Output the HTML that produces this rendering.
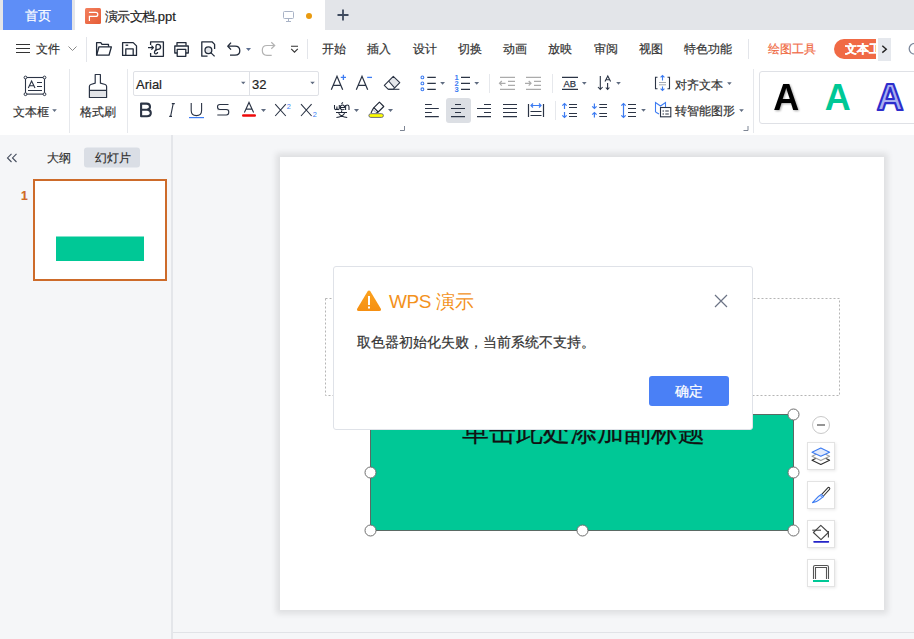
<!DOCTYPE html>
<html><head><meta charset="utf-8">
<style>
*{box-sizing:border-box;margin:0;padding:0}
html,body{width:914px;height:639px;overflow:hidden;background:#f5f6f8;font-family:"Liberation Sans",sans-serif;color:#333}
.a{position:absolute}
svg{position:absolute;overflow:visible}
.t{position:absolute;white-space:nowrap;line-height:1;-webkit-text-stroke:0.2px currentColor}
</style></head><body>
<!-- tab bar -->
<div class="a" style="left:0;top:0;width:914px;height:30px;background:#e3e5e9"></div>
<div class="a" style="left:3px;top:0;width:69px;height:30px;background:#5e8ef7"></div>
<div class="t" style="left:25px;top:10px;font-size:12.5px;color:#fff">首页</div>
<div class="a" style="left:75px;top:0;width:250px;height:30px;background:#fff"></div>

<!-- toolbar -->
<div class="a" style="left:0;top:30px;width:914px;height:105px;background:#fff"></div>


<!-- tab content -->
<svg class="a" style="left:0;top:0" width="914" height="30">
  <defs><linearGradient id="pg" x1="0" y1="0" x2="1" y2="1"><stop offset="0" stop-color="#f3805e"/><stop offset="1" stop-color="#e65c36"/></linearGradient></defs>
  <rect x="85" y="8" width="16" height="16" rx="1.5" fill="url(#pg)"/>
  <path d="M89.4 21 V16.4 H95.6 Q97.8 16.4 97.8 14.4 Q97.8 12.4 95.6 12.4 H88.9" fill="none" stroke="#fff" stroke-width="1.2"/>
  <g fill="none" stroke="#a9b3c6" stroke-width="1">
    <rect x="283.5" y="11.5" width="10" height="7" rx="1"/>
    <path d="M288.5 18.5 L288.5 21 M286 21.5 L291 21.5"/>
  </g>
  <circle cx="309" cy="16" r="3" fill="#e99a0f"/>
  <path d="M343 9.5 L343 20.5 M337.5 15 L348.5 15" stroke="#3e4a5e" stroke-width="1.8"/>
</svg>
<div class="t" style="left:105px;top:10px;font-size:13px;color:#222"><span style="letter-spacing:-0.7px">演示文档</span>.ppt</div>

<!-- menu row -->
<svg class="a" style="left:0;top:0" width="914" height="70">
  <g stroke="#333" stroke-width="1.2">
    <path d="M16 44.5 H30 M16 48.5 H30 M16 52.5 H30"/>
  </g>
  <path d="M68.5 46.5 L72.5 50.5 L76.5 46.5" fill="none" stroke="#888" stroke-width="1"/>
  <rect x="86" y="37" width="1" height="25" fill="#e3e5ea"/>
  <g fill="none" stroke="#222b3a" stroke-width="1.3" stroke-linejoin="round">
    <!-- folder -->
    <path d="M96.6 55.2 L96.6 42.6 L100.8 42.6 L102 44.4 L108.5 44.4 L108.5 46.8"/>
    <path d="M96.6 55.2 L99 46.8 L111.4 46.8 L109 55.2 Z"/>
    <!-- save -->
    <path d="M122.6 42.6 L133.2 42.6 L136.5 45.9 L136.5 55.4 L122.6 55.4 Z"/>
    <path d="M125.8 55.4 L125.8 48.8 L133.2 48.8 L133.2 55.4"/>
    <path d="M125.6 45.2 L128.2 45.2"/>
    <!-- export -->
    <path d="M150.6 45 L150.6 41.8 L163.4 41.8 L163.4 56.3 L150.6 56.3 L150.6 53"/>
    <path d="M148 47.6 L153.2 47.6 M151.4 45.6 L153.4 47.6 L151.4 49.6"/>
    <path d="M156 51 L156 46 Q156 44.3 157.8 44.3 Q160.6 44.3 160.6 47 Q160.6 49.4 158 49.4 Q155 49.4 154.5 52 Q154.3 53.8 156 53.8 Q157.6 53.8 157.6 52"/>
    <!-- print -->
    <path d="M177 45.6 L177 42.6 L186 42.6 L186 45.6"/>
    <path d="M177.2 53 L174.8 53 L174.8 46 L188.3 46 L188.3 53 L185.8 53"/>
    <rect x="177.2" y="49.4" width="8.6" height="6.9"/>
    <!-- preview -->
    <path d="M207.5 56.2 L201.8 56.2 L201.8 41.8 L212 41.8 L214.6 44.4 L214.6 49"/>
    <circle cx="208.4" cy="50.2" r="3.4" fill="#e4e6ea"/>
    <path d="M210.8 52.6 L214.6 56.4"/>
    <!-- undo -->
    <path d="M228.5 46.2 L235 46.2 Q239.8 46.2 239.8 50.8 Q239.8 55.2 235 55.2 L230 55.2"/>
    <path d="M231 42.6 L227.8 46.2 L231 49.6"/>
  </g>
  <path d="M246 48 L251 48 L248.5 51 Z" fill="#5d6e8f"/>
  <g fill="none" stroke="#b3b3b3" stroke-width="1.2">
    <path d="M274.5 45.5 L267 45.5 Q262.3 45.5 262.3 50.3 Q262.3 55.3 267 55.3 L271.7 55.3"/>
    <path d="M271.3 42.2 L274.7 45.5 L271.3 48.8"/>
  </g>
  <path d="M291 46.3 H298 M291.2 48.8 L294.5 52.2 L297.8 48.8" fill="none" stroke="#333" stroke-width="1.1"/>
  <rect x="307" y="39" width="1" height="20" fill="#e3e5ea"/>
  <rect x="748" y="39" width="1" height="20" fill="#e3e5ea"/>
</svg>
<div class="t" style="left:36px;top:43px;font-size:12px;color:#333">文件</div>
<div class="t" style="left:322px;top:43px;font-size:12px;color:#333">开始</div>
<div class="t" style="left:367px;top:43px;font-size:12px;color:#333">插入</div>
<div class="t" style="left:413px;top:43px;font-size:12px;color:#333">设计</div>
<div class="t" style="left:458px;top:43px;font-size:12px;color:#333">切换</div>
<div class="t" style="left:503px;top:43px;font-size:12px;color:#333">动画</div>
<div class="t" style="left:548px;top:43px;font-size:12px;color:#333">放映</div>
<div class="t" style="left:594px;top:43px;font-size:12px;color:#333">审阅</div>
<div class="t" style="left:639px;top:43px;font-size:12px;color:#333">视图</div>
<div class="t" style="left:684px;top:43px;font-size:12px;color:#333">特色功能</div>
<div class="t" style="left:768px;top:43px;font-size:12px;color:#f06c45">绘图工具</div>
<div class="a" style="left:834px;top:39px;width:42px;height:20px;background:#f06a45;border-radius:10px 0 0 10px"></div>
<div class="t" style="left:845px;top:43px;font-size:12px;color:#fff;font-weight:bold;width:31px;overflow:hidden">文本工具</div>
<div class="a" style="left:878px;top:38px;width:13px;height:23px;background:#e5e8ed"></div>
<svg class="a" style="left:0;top:0" width="914" height="70">
  <path d="M882.3 45.8 L886.3 49.2 L882.3 52.6" fill="none" stroke="#222" stroke-width="1.4"/>
  <circle cx="914.6" cy="48.8" r="5.4" fill="none" stroke="#7c879b" stroke-width="1.3"/>
</svg>
<!-- left panel -->
<div class="a" style="left:0;top:135px;width:172px;height:504px;background:#f5f6f8"></div>
<div class="a" style="left:171px;top:135px;width:2px;height:504px;background:#e4e6ea"></div>
<div class="a" style="left:173px;top:632px;width:741px;height:1px;background:#e1e3e7"></div>


<!-- ribbon -->
<div class="a" style="left:133px;top:71px;width:186px;height:25px;border:1px solid #dfe1e6;border-radius:2px"></div>
<div class="a" style="left:249px;top:72px;width:1px;height:23px;background:#dfe1e6"></div>
<div class="t" style="left:136px;top:78px;font-size:13px;color:#222">Arial</div>
<div class="t" style="left:252px;top:78px;font-size:13px;color:#222">32</div>
<div class="a" style="left:759px;top:71px;width:170px;height:53px;border:1px solid #dfe1e6;border-radius:3px"></div>
<div class="t" style="left:13px;top:106px;font-size:12px;color:#333">文本框</div>
<div class="t" style="left:80px;top:106px;font-size:12px;color:#333">格式刷</div>
<div class="t" style="left:675px;top:79px;font-size:12px;color:#333">对齐文本</div>
<div class="t" style="left:675px;top:105px;font-size:12px;color:#333">转智能图形</div>
<div class="a" style="left:446px;top:98px;width:25px;height:25px;background:#dcdfe4;border-radius:3px"></div>
<svg class="a" style="left:0;top:0" width="914" height="135">
  <defs>
    <filter id="sh" x="-30%" y="-30%" width="160%" height="160%"><feGaussianBlur in="SourceAlpha" stdDeviation="1"/><feOffset dx="0.5" dy="1"/><feComponentTransfer><feFuncA type="linear" slope="0.35"/></feComponentTransfer><feMerge><feMergeNode/><feMergeNode in="SourceGraphic"/></feMerge></filter>
  </defs>
  <!-- separators -->
  <g fill="#e6e8ec">
    <rect x="69" y="69" width="1" height="64"/>
    <rect x="127" y="69" width="1" height="64"/>
    <rect x="489" y="74" width="1" height="19"/>
    <rect x="552" y="74" width="1" height="19"/>
    <rect x="555" y="101" width="1" height="19"/>
    <rect x="753" y="69" width="1" height="64"/>
  </g>
  <!-- carets -->
  <g fill="#5f6b80">
    <path d="M52.2 109.2 L56.8 109.2 L54.5 111.9 Z"/>
    <path d="M241 81.8 L245.5 81.8 L243.3 84.3 Z"/>
    <path d="M310.3 81.8 L314.8 81.8 L312.5 84.3 Z"/>
    <path d="M261 109 L266 109 L263.5 112 Z"/>
    <path d="M354 109 L359 109 L356.5 112 Z"/>
    <path d="M388 109 L393 109 L390.5 112 Z"/>
    <path d="M440.2 82 L445 82 L442.6 84.8 Z"/>
    <path d="M474.3 82 L479.1 82 L476.7 84.8 Z"/>
    <path d="M582 82 L586.6 82 L584.3 84.8 Z"/>
    <path d="M616.2 82 L620.8 82 L618.5 84.8 Z"/>
    <path d="M641.2 109 L645.8 109 L643.5 111.8 Z"/>
    <path d="M727.1 82.3 L731.7 82.3 L729.4 85 Z"/>
    <path d="M739.2 109.2 L743.8 109.2 L741.5 112 Z"/>
  </g>
  <!-- corner marks -->
  <path d="M400 130.5 L404.5 130.5 L404.5 126" fill="none" stroke="#7d8594" stroke-width="1"/>
  <path d="M743.5 130.5 L748 130.5 L748 126" fill="none" stroke="#7d8594" stroke-width="1"/>
  <!-- text box icon -->
  <g fill="none" stroke="#2b3445" stroke-width="1.1">
    <rect x="25.5" y="77.5" width="19" height="16.6"/>
    <path d="M28.3 88 L31.6 81 L35 88 M29.4 85.8 L33.8 85.8"/>
    <path d="M37 82.5 H42 M37 86.5 H42 M28 90.5 H42"/>
  </g>
  <g fill="#fff" stroke="#2b3445" stroke-width="1">
    <circle cx="25.5" cy="77.5" r="1.4"/><circle cx="44.5" cy="77.5" r="1.4"/>
    <circle cx="25.5" cy="94.2" r="1.4"/><circle cx="44.5" cy="94.2" r="1.4"/>
  </g>
  <!-- brush icon -->
  <path d="M89.5 90.5 H106.5 V97.5 H89.5 Z" fill="#e2e4e8"/>
  <path d="M95.2 74.5 H100.4 V83.2 L105.2 84.5 Q106.6 85 106.6 86.5 V97.5 H89.4 V86.5 Q89.4 85 90.8 84.5 L95.2 83.2 Z M89.4 90.3 H106.6" fill="none" stroke="#2b3445" stroke-width="1.2" stroke-linejoin="round"/>
  <!-- A+ A- eraser -->
  <g fill="none" stroke="#2b3445" stroke-width="1.2">
    <path d="M331.3 89.8 L337 76.3 L342.7 89.8 M333.2 85.3 L340.8 85.3"/>
    <path d="M356.3 89.8 L362 76.3 L367.7 89.8 M358.2 85.3 L365.8 85.3"/>
  </g>
  <path d="M388.6 81 L393.3 76.3 L399.8 82.7 L394.6 87.9 Z" fill="#e4e6ea"/>
  <g fill="none" stroke="#2b3445" stroke-width="1.1" stroke-linejoin="round">
    <path d="M384.3 85.3 L393.3 76.3 L399.8 82.7 L393.2 89.3 L388.3 89.3 Z"/>
    <path d="M388.6 81 L394.6 87.9"/>
    <path d="M388.3 89.3 H399.4"/>
  </g>
  <path d="M343.4 74.8 V80 M340.8 77.4 H346" stroke="#3d7cf2" stroke-width="1.3"/>
  <path d="M367.2 77.4 H372" stroke="#3d7cf2" stroke-width="1.3"/>
  <!-- B I U S -->
  <path d="M141.1 103.6 H146.5 Q150 103.6 150 106.8 Q150 109.2 147.4 109.6 Q150.8 110 150.8 113 Q150.8 116.2 147 116.2 H141.1 Z M141.1 109.7 H147" fill="none" stroke="#2b3445" stroke-width="2.1" stroke-linejoin="round"/>
  <g fill="none" stroke="#2b3445" stroke-width="1.1">
    <path d="M170.6 116.4 L173.2 103.6 M169.2 116.4 H172 M171.8 103.6 H174.8"/>
    <path d="M191.2 103 V110.5 Q191.2 115.6 196.4 115.6 Q201.6 115.6 201.6 110.5 V103"/>
    <path d="M228.5 104.5 H219.8 Q217.5 104.5 217.5 106.8 Q217.5 109.5 219.8 109.5 H226.3 Q228.8 109.5 228.8 112 Q228.8 115 226.3 115 H217.3"/>
  </g>
  <path d="M217 109.8 H229.5" stroke="#2b3445" stroke-width="0.6" opacity="0.3"/>
  <rect x="189" y="117" width="15" height="1.2" fill="#3d7cf2"/>
  <!-- A red -->
  <path d="M244.4 112.4 L249 102.4 L253.6 112.4 M245.9 109.1 L252.1 109.1" fill="none" stroke="#2b3445" stroke-width="1.1"/>
  <rect x="242" y="114.3" width="14" height="2.4" rx="1.2" fill="#ee0a0a"/>
  <!-- X2 -->
  <path d="M275.2 104.2 L285.8 116 M285.8 104.2 L275.2 116" stroke="#2b3445" stroke-width="1.1"/>
  <path d="M301 104.2 L311.6 116 M311.6 104.2 L301 116" stroke="#2b3445" stroke-width="1.1"/>
  <text x="286.8" y="108.9" font-family="Liberation Sans" font-size="7.4" fill="#3d7cf2">2</text>
  <text x="312.8" y="116.8" font-family="Liberation Sans" font-size="7.4" fill="#3d7cf2">2</text>
  <!-- wen -->
  <g fill="none" stroke="#1f2737" stroke-width="1.05">
  <path d="M334.5 105 V108.3 Q334.5 109.6 335.7 109.6 Q336.9 109.6 336.9 108.3 V106.5 M336.9 108.3 Q336.9 109.6 338.1 109.6 Q339.3 109.6 339.3 108.3 V105"/>
  <path d="M340.3 107.4 H344.6 Q344.6 105 342.5 105 Q340.3 105 340.3 107.4 Q340.3 109.7 342.5 109.7 Q343.8 109.7 344.4 109"/>
  <path d="M341.5 103.8 L342.9 102.4"/>
  <path d="M345.6 109.9 V105 M345.6 106.8 Q345.6 105 347.3 105 Q349 105 349 106.8 V109.9"/>
  <path d="M341.6 110.6 V112 M336 112.5 H347 M338.6 113.3 Q341 117 347.2 117.5 M344.6 113.3 Q342.4 117 336.4 117.5"/>
  </g>
  <!-- highlighter -->
  <g fill="none" stroke="#1f2737" stroke-width="1.1" stroke-linejoin="round">
  <path d="M379.4 102.2 L383.8 106.5 L378.2 112 L373.9 107.6 Z"/>
  <path d="M373.9 107.6 L372.6 109.6 L371 113 M378.2 112 L376.2 113"/>
  </g>
  <path d="M373.4 109.8 L376 112.6" stroke="#8a8f99" stroke-width="0.9"/>
  <rect x="368.9" y="113.7" width="14.5" height="3.7" rx="1.85" fill="#fefe00" stroke="#5e5e7e" stroke-width="0.9"/>
  <!-- bullets -->
  <g fill="none" stroke="#3d7cf2" stroke-width="1.1">
    <circle cx="422.4" cy="77.4" r="1.4"/><circle cx="422.4" cy="83.4" r="1.4"/><circle cx="422.4" cy="89.3" r="1.4"/>
  </g>
  <g stroke="#2b3445" stroke-width="1.2">
    <path d="M427.3 77.4 H435.8 M427.3 83.4 H435.8 M427.3 89.3 H435.8"/>
    <path d="M461 77.4 H470 M461 83.4 H470 M461 89.3 H470"/>
  </g>
  <g font-family="Liberation Sans" font-weight="bold" font-size="7.6" fill="#3d7cf2">
    <text x="454.6" y="80">1</text><text x="454.6" y="86">2</text><text x="454.6" y="92">3</text>
  </g>
  <!-- outdent / indent -->
  <g stroke="#ababab" stroke-width="1.2" fill="none">
    <path d="M500 77.3 H515 M508 81.4 H515 M508 85.3 H515 M500 89.3 H515"/>
    <path d="M499.5 83.3 H505.5 M501.8 81 L499.5 83.3 L501.8 85.6"/>
    <path d="M526 77.3 H541 M534 81.4 H541 M534 85.3 H541 M526 89.3 H541"/>
    <path d="M525 83.3 H531 M528.7 81 L531 83.3 L528.7 85.6"/>
  </g>
  <!-- AB -->
  <g stroke="#2b3445" stroke-width="1.2"><path d="M562 77.4 H578 M562 89.4 H578"/></g>
  <text x="563.4" y="86.8" font-family="Liberation Sans" font-size="9.4" fill="#2b3445" stroke="#2b3445" stroke-width="0.25">AB</text>
  <!-- sort -->
  <g fill="none" stroke="#2b3445" stroke-width="1.1">
    <path d="M600.3 76 V89.3 M598 87 L600.3 89.5 L602.6 87"/>
    <path d="M605 81.5 L607.8 76 L610.6 81.5 M605.8 79.8 H609.8"/>
    <path d="M607.6 83 V89.3 M605.8 87.5 L607.6 89.5 L609.4 87.5"/>
  </g>
  <!-- align lines -->
  <g stroke="#2b3445" stroke-width="1.2">
    <path d="M425 104.5 H431.8 M425 108.5 H438.8 M425 112.5 H431.8 M425 116.6 H438.8"/>
    <path d="M455 104.5 H461 M451 108.5 H465 M455 112.5 H461 M451 116.6 H465"/>
    <path d="M484 104.5 H491 M477 108.5 H491 M484 112.5 H491 M477 116.6 H491"/>
    <path d="M503 104.5 H517 M503 108.5 H517 M503 112.5 H517 M503 116.6 H517"/>
    <path d="M528.5 104 V117 M543.5 104 V117 M530.5 111.5 H541.5 M530.5 115.5 H541.5"/>
    <path d="M569 104.5 H577 M569 107.5 H577 M569 113.5 H577 M569 116.5 H577"/>
    <path d="M599.3 104.5 H607 M599.3 107.5 H607 M599.3 113.5 H607 M599.3 116.5 H607"/>
    <path d="M628 104.5 H636 M628 108.5 H636 M628 112.5 H636 M628 116.5 H636"/>
  </g>
  <g fill="none" stroke="#3d7cf2" stroke-width="1.2">
    <path d="M531 105.5 H541 M533 103.5 L531 105.5 L533 107.5 M539 103.5 L541 105.5 L539 107.5"/>
    <path d="M564.5 103.5 V109 M562.3 105.7 L564.5 103.5 L566.7 105.7 M564.5 112 V117.5 M562.3 115.3 L564.5 117.5 L566.7 115.3"/>
    <path d="M594.4 103.5 V108.5 M592.2 106.3 L594.4 108.5 L596.6 106.3 M594.4 112.5 V117.5 M592.2 114.7 L594.4 112.5 L596.6 114.7"/>
    <path d="M623.5 103.5 V117.5 M621.3 105.7 L623.5 103.5 L625.7 105.7 M621.3 115.3 L623.5 117.5 L625.7 115.3"/>
  </g>
  <!-- align text icon -->
  <g fill="none" stroke="#2b3445" stroke-width="1.1">
    <path d="M657.5 77.2 H655.5 V88.8 H657.5 M667.5 77.2 H669.5 V88.8 H667.5"/>
  </g>
  <path d="M659 82.5 H666 M659 84.8 H666" stroke="#9aa0aa" stroke-width="0.9"/>
  <g fill="none" stroke="#3d7cf2" stroke-width="1.1">
    <path d="M662.5 75.5 V80.5 M660.6 77.4 L662.5 75.5 L664.4 77.4 M662.5 86.5 V90.5 M660.6 88.6 L662.5 90.5 L664.4 88.6"/>
  </g>
  <!-- smart art icon -->
  <path d="M655.5 112 V102.5 L660.5 106 L665.5 102.5 V107" fill="none" stroke="#3d7cf2" stroke-width="1.1"/>
  <path d="M655.5 112 L659 114" fill="none" stroke="#3d7cf2" stroke-width="1.1"/>
  <rect x="660.5" y="107.5" width="10.3" height="9.3" fill="#fff" stroke="#2b3445" stroke-width="1.1"/>
  <path d="M662.5 111 H664 M665.3 111 H668.8 M662.5 114 H664 M665.3 114 H668.8" stroke="#2b3445" stroke-width="1"/>
  <!-- wordart -->
  <text x="773.2" y="109.8" font-family="Liberation Sans" font-weight="bold" font-size="36" fill="#000" filter="url(#sh)">A</text>
  <text x="824.8" y="109.8" font-family="Liberation Sans" font-weight="bold" font-size="36" fill="#00c896">A</text>
  <text x="876.8" y="109.6" font-family="Liberation Sans" font-weight="bold" font-size="37" fill="#a9b0f0" stroke="#2d2dcc" stroke-width="2.2" stroke-linejoin="round">A</text>
</svg>

<!-- left panel content -->
<svg class="a" style="left:0;top:0" width="172" height="300">
  <path d="M11.5 153.8 L7.5 157.9 L11.5 162 M16.5 153.8 L12.5 157.9 L16.5 162" fill="none" stroke="#444c5c" stroke-width="1.1"/>
  <rect x="84" y="147.5" width="56" height="20" rx="3" fill="#dadee5"/>
  <rect x="34" y="180" width="132" height="100" fill="#fff" stroke="#cd6b2a" stroke-width="2"/>
  <rect x="56" y="236.5" width="88" height="24.5" fill="#00c896"/>
</svg>
<div class="t" style="left:47px;top:152px;font-size:12px;color:#333">大纲</div>
<div class="t" style="left:95px;top:152px;font-size:12px;color:#333">幻灯片</div>
<div class="t" style="left:21px;top:190px;font-size:12px;font-weight:bold;color:#cf6a25">1</div>
<!-- slide -->
<div class="a" style="left:280px;top:157px;width:604px;height:453px;background:#fff;box-shadow:0 0 6px 4px rgba(0,0,0,0.09)"></div>


<!-- slide content -->
<svg class="a" style="left:0;top:0" width="914" height="639">
  <rect x="325.5" y="298.5" width="514" height="97" fill="none" stroke="#b5b5b5" stroke-width="1" stroke-dasharray="2 2"/>
  <rect x="370" y="414" width="423" height="116" fill="#00c896"/>
  <rect x="370.5" y="414.5" width="423" height="116" fill="none" stroke="#5a6a64" stroke-width="1"/>
</svg>
<div class="t" style="left:462px;top:419px;font-size:26.7px;color:#111;width:241px;text-align:center">单击此处添加副标题</div>
<svg class="a" style="left:0;top:0" width="914" height="639">
  <g fill="#fff" stroke="#6e6e6e" stroke-width="1">
  <circle cx="793.5" cy="414.5" r="5.5"/>
  <circle cx="370.5" cy="472.5" r="5.5"/>
  <circle cx="793.5" cy="472.5" r="5.5"/>
  <circle cx="370.5" cy="530.5" r="5.5"/>
  <circle cx="582.5" cy="530.5" r="5.5"/>
  <circle cx="793.5" cy="530.5" r="5.5"/>
  </g>
  <circle cx="821" cy="425" r="8.5" fill="#fff" stroke="#c9c9c9" stroke-width="1"/>
  <line x1="817" y1="425" x2="825" y2="425" stroke="#7a7a7a" stroke-width="1.6"/>
</svg>
<div class="a" style="left:807px;top:442px;width:28px;height:28px;background:#fff;border:1px solid #e3e3e3;box-shadow:1px 1px 3px rgba(0,0,0,0.09)"></div>
<div class="a" style="left:807px;top:481px;width:28px;height:28px;background:#fff;border:1px solid #e3e3e3;box-shadow:1px 1px 3px rgba(0,0,0,0.09)"></div>
<div class="a" style="left:807px;top:520px;width:28px;height:28px;background:#fff;border:1px solid #e3e3e3;box-shadow:1px 1px 3px rgba(0,0,0,0.09)"></div>
<div class="a" style="left:807px;top:559px;width:28px;height:28px;background:#fff;border:1px solid #e3e3e3;box-shadow:1px 1px 3px rgba(0,0,0,0.09)"></div>
<svg class="a" style="left:0;top:0" width="914" height="639">
  <!-- layers -->
  <path d="M812 460.3 L820.8 456 L829.6 460.3 L820.8 464.4 Z" fill="#fff" stroke="#2e2e2e" stroke-width="1.1" stroke-linejoin="round"/>
  <path d="M812 456.3 L820.8 452 L829.6 456.3 L820.8 460.6 Z" fill="#fff" stroke="#a0a0a0" stroke-width="1.1" stroke-linejoin="round"/>
  <path d="M812 452.2 L820.8 448.1 L829.6 452.2 L820.8 456.3 Z" fill="#e3ebfd" stroke="#3d7cf2" stroke-width="1.1" stroke-linejoin="round"/>
  <!-- brush -->
  <path d="M828.6 488.6 L822.6 495.2" stroke="#333" stroke-width="3.4" stroke-linecap="round"/>
  <path d="M828.6 488.6 L822.6 495.2" stroke="#fff" stroke-width="1.3" stroke-linecap="round"/>
  <path d="M821.2 494.4 Q818.2 496 815.6 499.3 L812.5 502.6 Q816.8 502.2 819.9 499.4 Q821.8 497.8 823.6 496.6 Z" fill="#eef3fe" stroke="#3d7cf2" stroke-width="1.1" stroke-linejoin="round"/>
  <path d="M820.6 495.9 L822.2 497.5" stroke="#3d7cf2" stroke-width="1"/>
  <!-- fill bucket -->
  <path d="M820.8 525.3 L828.4 532.5 L821 539.6 L813.4 532.5 Z" fill="none" stroke="#444" stroke-width="1.1" stroke-linejoin="round"/>
  <path d="M812.3 530.2 H821" stroke="#444" stroke-width="1.1"/>
  <path d="M828.4 531 V537.5" stroke="#444" stroke-width="1.1"/>
  <path d="M813.5 541 H829 Q829.6 542.8 828.5 542.8 H814 Q812.8 542.8 813.5 541 Z" fill="#2323c8"/>
  <!-- border -->
  <path d="M813.5 579 L813.5 567 Q813.5 565.5 815 565.5 L827 565.5 Q828.5 565.5 828.5 567 L828.5 579" fill="none" stroke="#555" stroke-width="1.1"/>
  <path d="M815.5 579 L815.5 567.5 L826.5 567.5 L826.5 579" fill="none" stroke="#555" stroke-width="1.1"/>
  <rect x="813" y="580" width="16" height="2" fill="#00c896"/>
</svg>
<!-- dialog -->
<div class="a" style="left:333px;top:266px;width:420px;height:164px;background:#fff;border:1px solid #dfe2e8;border-radius:3px"></div>

<!-- dialog content -->
<svg class="a" style="left:0;top:0" width="914" height="639">
  <defs><linearGradient id="wg" x1="0" y1="0" x2="0" y2="1"><stop offset="0" stop-color="#fba21f"/><stop offset="1" stop-color="#f58f12"/></linearGradient></defs>
  <path d="M369 290.5 Q369.8 290.5 370.5 291.5 L381 309 Q381.5 311 379.5 311 L358.5 311 Q356.5 311 357 309 L367.5 291.5 Q368.2 290.5 369 290.5 Z" fill="url(#wg)"/>
  <rect x="368" y="296" width="2" height="9" fill="#fff"/>
  <rect x="368" y="306.5" width="2" height="2" fill="#fff"/>
  <path d="M715 295 L727 307 M727 295 L715 307" stroke="#6b7385" stroke-width="1.2"/>
</svg>
<div class="t" style="left:389px;top:292px;font-size:19px;color:#f3921c;letter-spacing:-0.4px;-webkit-text-stroke:0">WPS 演示</div>
<div class="t" style="left:357px;top:335px;font-size:14px;color:#333">取色器初始化失败，当前系统不支持。</div>
<div class="a" style="left:649px;top:376px;width:80px;height:30px;background:#4a80f6;border-radius:3px"></div>
<div class="t" style="left:649px;top:384px;width:80px;text-align:center;font-size:14px;color:#fff">确定</div>
</body></html>
